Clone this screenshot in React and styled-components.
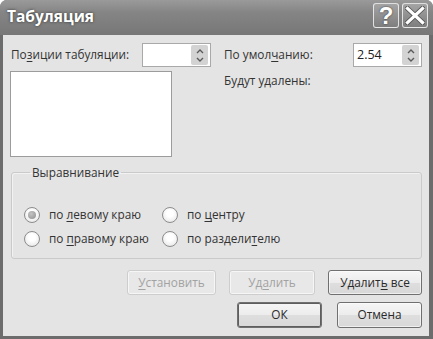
import styled, {createGlobalStyle} from 'styled-components';

const GlobalStyle = createGlobalStyle`
  html, body {
    margin: 0;
    padding: 0;
    width: 433px;
    height: 339px;
    overflow: hidden;
    background: #ffffff;
  }
`;

const Window = styled.div`
  width: 433px;
  height: 339px;
  box-sizing: border-box;
  display: flex;
  flex-direction: column;
  background: #6c6c6c;
  border-radius: 7px 7px 0 0;
  font-family: 'Open Sans', 'Noto Sans', sans-serif;
  font-size: 11.8px;
  color: #333333;
  overflow: hidden;
`;

const TitleBar = styled.div`
  height: 35px;
  flex: none;
  display: flex;
  align-items: center;
  padding: 0 5px 0 7px;
  background: linear-gradient(#9a9a9a 0%, #858585 35%, #777777 100%);
`;

const Title = styled.div`
  flex: 1;
  color: #ffffff;
  font-size: 15.5px;
  font-weight: 700;
  text-shadow: 0 0 3px rgba(0, 0, 0, 0.6);
  padding-bottom: 3px;
`;

const CaptionButton = styled.div`
  width: 26px;
  height: 25px;
  box-sizing: border-box;
  margin-left: ${(p) => (p.$gap ? '3px' : '0')};
  margin-bottom: 4px;
  display: flex;
  align-items: center;
  justify-content: center;
  border: 1px solid rgba(255, 255, 255, 0.75);
  border-radius: 3px;
  background: linear-gradient(#a4a4a4, #7e7e7e);
  color: #ffffff;
  font-size: 24px;
  font-weight: 700;
  font-family: 'Liberation Sans', sans-serif;
  text-shadow: 0 0 2px rgba(0, 0, 0, 0.7);
`;

const Client = styled.div`
  flex: 1;
  margin: 0 4px 3px 3px;
  background: #e4e4e4;
  padding: 8px 7px 0 7px;
  display: flex;
  flex-direction: column;
`;

const TopRow = styled.div`
  display: grid;
  grid-template-columns: 201px 199px;
  column-gap: 12px;
`;

const Column = styled.div`
  display: flex;
  flex-direction: column;
`;

const FieldRow = styled.div`
  height: 24px;
  display: flex;
  align-items: center;
  justify-content: space-between;
`;

const Label = styled.span`
  padding-left: 1px;
  padding-bottom: 2px;
  white-space: nowrap;
`;

const SpinBox = styled.div`
  width: 69px;
  height: 24px;
  box-sizing: border-box;
  border: 1px solid #a9a9a9;
  background: #ffffff;
  display: flex;
  align-items: stretch;
  padding: 1px 2px 1px 0;
`;

const SpinValue = styled.div`
  flex: 1;
  padding-left: 3px;
  font-size: 12.5px;
  color: #222;
  display: flex;
  align-items: center;
  padding-bottom: 2px;
`;

const SpinArrows = styled.div`
  width: 17px;
  background: #d3d3d3;
  border-radius: 2px;
  display: flex;
  flex-direction: column;
  align-items: center;
  justify-content: center;
  gap: 3px;
`;

const ListBox = styled.div`
  margin-top: 4px;
  width: 162px;
  height: 86px;
  box-sizing: border-box;
  border: 1px solid #9c9c9c;
  background: #ffffff;
`;

const Note = styled.div`
  margin-top: 5px;
  padding-left: 1px;
  line-height: 16px;
`;

const Group = styled.fieldset`
  margin: 7px 0 0 1px;
  padding: 0 0 9px 12px;
  border: 1px solid #cacaca;
  border-radius: 3px;
  box-shadow: inset 1px 1px 0 #f2f2f2;
  min-width: 0;
`;

const Legend = styled.legend`
  margin-left: 6px;
  padding: 0 2px;
  line-height: 16px;
`;

const RadioGrid = styled.div`
  margin-top: 25px;
  display: grid;
  grid-template-columns: 138px 1fr;
  row-gap: 4px;
`;

const RadioItem = styled.div`
  height: 20px;
  display: flex;
  align-items: center;
  gap: 9px;
  white-space: nowrap;
`;

const RadioCircle = styled.span`
  width: 16px;
  height: 16px;
  box-sizing: border-box;
  border-radius: 50%;
  border: 1px solid #8c8c8c;
  background: radial-gradient(circle at 50% 40%, #ffffff 30%, #e0e0e0 100%);
  display: flex;
  align-items: center;
  justify-content: center;
  flex: none;

  &::after {
    content: '';
    width: 8px;
    height: 8px;
    border-radius: 50%;
    background: ${(p) => (p.$checked ? 'radial-gradient(circle at 40% 35%, #c4c4c4, #8e8e8e)' : 'transparent')};
  }
`;

const RadioText = styled.span`
  padding-bottom: 2px;
`;

const ButtonRow = styled.div`
  display: flex;
  justify-content: flex-end;
  gap: ${(p) => p.$gap}px;
  margin-top: ${(p) => p.$top}px;
`;

const Button = styled.div`
  width: ${(p) => p.$w}px;
  height: ${(p) => p.$h}px;
  box-sizing: border-box;
  display: flex;
  align-items: center;
  justify-content: center;
  padding-bottom: 2px;
  border-radius: 3px;
  border: 1px solid ${(p) => (p.$disabled ? '#cdcdcd' : '#707070')};
  background: ${(p) =>
    p.$disabled ? '#e8e8e8' : 'linear-gradient(#f6f6f6 0%, #ececec 50%, #dedede 51%, #d8d8d8 100%)'};
  color: ${(p) => (p.$disabled ? '#a2a2a2' : '#2a2a2a')};
  box-shadow: ${(p) => (p.$default ? 'inset 0 0 0 1px #5e5e5e' : 'inset 0 0 0 1px rgba(255,255,255,0.6)')};
`;

const Key = styled.u`
  text-underline-offset: 2px;
`;

const Chevron = ({down}) => (
  <svg width="8" height="5" viewBox="0 0 8 5">
    <path
      d={down ? 'M1 1 L4 4 L7 1' : 'M1 4 L4 1 L7 4'}
      fill="none"
      stroke="#5a5a5a"
      strokeWidth="1.4"
    />
  </svg>
);

function Spin({value}) {
  return (
    <SpinBox>
      <SpinValue>{value}</SpinValue>
      <SpinArrows>
        <Chevron />
        <Chevron down />
      </SpinArrows>
    </SpinBox>
  );
}

function Radio({checked, children}) {
  return (
    <RadioItem>
      <RadioCircle $checked={checked} />
      <RadioText>{children}</RadioText>
    </RadioItem>
  );
}

export default function App() {
  return (
    <>
      <GlobalStyle />
      <Window>
        <TitleBar>
          <Title>Табуляция</Title>
          <CaptionButton>?</CaptionButton>
          <CaptionButton $gap>
            <svg width="20" height="19" viewBox="0 0 20 19">
              <path d="M2.5 2.5 L17.5 16.5 M17.5 2.5 L2.5 16.5" stroke="#555" strokeWidth="5" strokeLinecap="square" />
              <path d="M2.5 2.5 L17.5 16.5 M17.5 2.5 L2.5 16.5" stroke="#fff" strokeWidth="3.2" strokeLinecap="square" />
            </svg>
          </CaptionButton>
        </TitleBar>
        <Client>
          <TopRow>
            <Column>
              <FieldRow>
                <Label>
                  По<Key>з</Key>иции табуляции:
                </Label>
                <Spin value="" />
              </FieldRow>
              <ListBox />
            </Column>
            <Column>
              <FieldRow>
                <Label>
                  По умол<Key>ч</Key>анию:
                </Label>
                <Spin value="2.54" />
              </FieldRow>
              <Note>Будут удалены:</Note>
            </Column>
          </TopRow>
          <Group>
            <Legend>Выравнивание</Legend>
            <RadioGrid>
              <Radio checked>
                по <Key>л</Key>евому краю
              </Radio>
              <Radio>
                по <Key>ц</Key>ентру
              </Radio>
              <Radio>
                по <Key>п</Key>равому краю
              </Radio>
              <Radio>
                по раздели<Key>т</Key>елю
              </Radio>
            </RadioGrid>
          </Group>
          <ButtonRow $gap={13} $top={11}>
            <Button $w={89} $h={25} $disabled>
              <span>
                <Key>У</Key>становить
              </span>
            </Button>
            <Button $w={86} $h={25} $disabled>
              <span>
                Уд<Key>а</Key>лить
              </span>
            </Button>
            <Button $w={94} $h={25}>
              <span>
                Удалит<Key>ь</Key> все
              </span>
            </Button>
          </ButtonRow>
          <ButtonRow $gap={15} $top={7}>
            <Button $w={85} $h={26} $default>
              ОК
            </Button>
            <Button $w={85} $h={26}>
              Отмена
            </Button>
          </ButtonRow>
        </Client>
      </Window>
    </>
  );
}
